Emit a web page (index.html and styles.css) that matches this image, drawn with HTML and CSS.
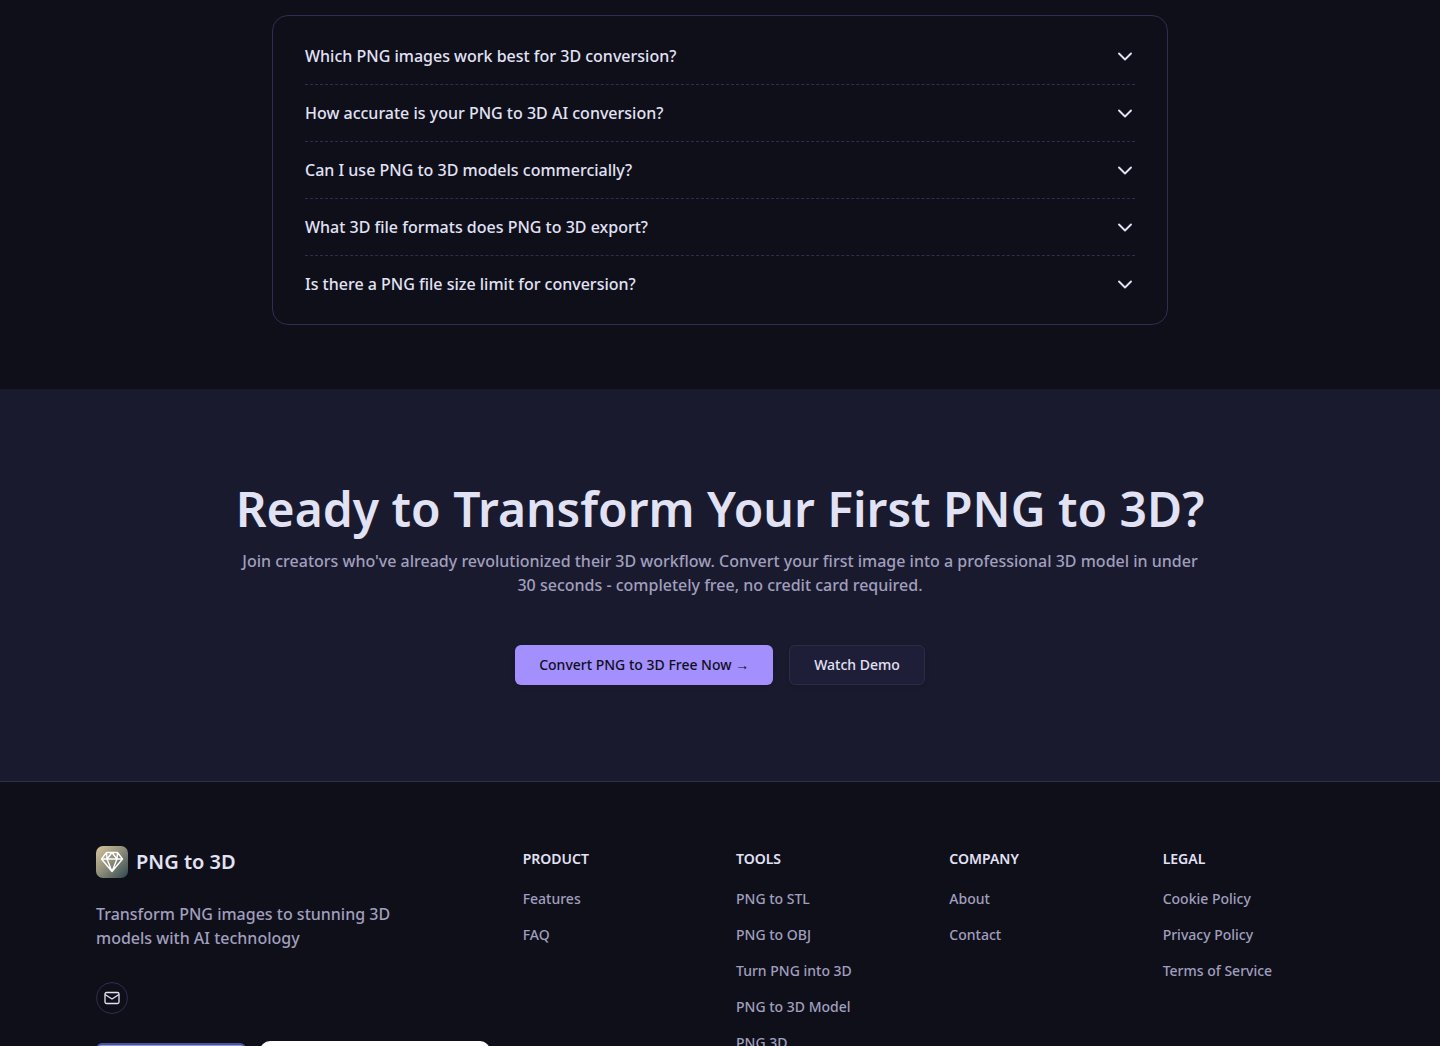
FILE: index.html
```html
<!doctype html>
<html lang="en">
<head>
<meta charset="utf-8">
<meta name="viewport" content="width=device-width,initial-scale=1">
<title>PNG to 3D</title>
<link rel="stylesheet" href="styles.css">
</head>
<body>
<main>
<section class="faq">
  <div class="faq-list">
    <button class="faq-item" type="button">Which PNG images work best for 3D conversion?
      <svg class="chevron" viewBox="0 0 20 20"><path d="M4 7.500l6 6 6-6"/></svg></button>
    <button class="faq-item" type="button">How accurate is your PNG to 3D AI conversion?
      <svg class="chevron" viewBox="0 0 20 20"><path d="M4 7.500l6 6 6-6"/></svg></button>
    <button class="faq-item" type="button">Can I use PNG to 3D models commercially?
      <svg class="chevron" viewBox="0 0 20 20"><path d="M4 7.500l6 6 6-6"/></svg></button>
    <button class="faq-item" type="button">What 3D file formats does PNG to 3D export?
      <svg class="chevron" viewBox="0 0 20 20"><path d="M4 7.500l6 6 6-6"/></svg></button>
    <button class="faq-item" type="button">Is there a PNG file size limit for conversion?
      <svg class="chevron" viewBox="0 0 20 20"><path d="M4 7.500l6 6 6-6"/></svg></button>
  </div>
</section>

<section class="cta">
  <div class="cta-inner">
    <h2>Ready to Transform Your First PNG to 3D?</h2>
    <p>Join creators who've already revolutionized their 3D workflow. Convert your first image into a professional 3D model in under 30 seconds - completely free, no credit card required.</p>
    <div class="actions">
      <button class="btn primary" type="button">Convert PNG to 3D Free Now →</button>
      <button class="btn" type="button">Watch Demo</button>
    </div>
  </div>
</section>
</main>

<footer>
  <div class="footer-grid">
    <div class="about">
      <a class="brand" href="#">
        <svg class="logo" viewBox="0 0 32 32">
          <defs><linearGradient id="logoBg" x1="0" y1="0" x2="1" y2="1">
            <stop offset="0" stop-color="#d9c69b"/><stop offset=".5" stop-color="#8b8b78"/><stop offset="1" stop-color="#2f4650"/>
          </linearGradient></defs>
          <rect width="32" height="32" rx="7" fill="url(#logoBg)"/>
          <path d="M10.500 6.500h11l5 6.500L16 25.500 5.500 13zM5.500 13h21M10.500 6.500L11 13l5 12.500L21 13l.5-6.500M11 13l5-6.500 5 6.500" fill="none" stroke="#fff" stroke-width="1.400" stroke-linejoin="round"/>
        </svg>
        PNG to 3D
      </a>
      <p>Transform PNG images to stunning 3D models with AI technology</p>
      <a class="mail" href="#" aria-label="Email">
        <svg viewBox="0 0 16 16"><rect x="1" y="2.500" width="14" height="11" rx="1.500"/><path d="M1 4.500l7 4.500 7-4.500"/></svg>
      </a>
      <div class="badges">
        <a class="badge blue" href="#"></a>
        <a class="badge white" href="#"></a>
      </div>
    </div>
    <nav>
      <h3>PRODUCT</h3>
      <a href="#">Features</a>
      <a href="#">FAQ</a>
    </nav>
    <nav>
      <h3>TOOLS</h3>
      <a href="#">PNG to STL</a>
      <a href="#">PNG to OBJ</a>
      <a href="#">Turn PNG into 3D</a>
      <a href="#">PNG to 3D Model</a>
      <a href="#">PNG 3D</a>
    </nav>
    <nav>
      <h3>COMPANY</h3>
      <a href="#">About</a>
      <a href="#">Contact</a>
    </nav>
    <nav>
      <h3>LEGAL</h3>
      <a href="#">Cookie Policy</a>
      <a href="#">Privacy Policy</a>
      <a href="#">Terms of Service</a>
    </nav>
  </div>
</footer>
</body>
</html>
```
FILE: styles.css
```css
:root{--bg:#0f0f1a;--panel:#1a1a2e;--panel2:#1f1e38;--text:#e2e2f5;--muted:#a09fbd;--line:#302d50;--accent:#a48fff}
*{box-sizing:border-box}
body{margin:0;height:100vh;overflow:hidden;background:var(--bg);color:var(--text);font:500 16px/24px "Noto Sans",sans-serif}
h2,h3,p{margin:0}
a{color:inherit;text-decoration:none}
button{font:inherit;color:inherit;cursor:pointer}

.faq{padding:15px 24px 64px}
.faq-list{max-width:896px;margin:auto;padding:12px 32px;border:1px solid var(--line);border-radius:16px}
.faq-item{display:flex;justify-content:space-between;align-items:center;width:100%;padding:16px 0;background:none;border:0;border-bottom:1px dashed var(--line);text-align:left}
.faq-item:last-child{border-bottom:0}
.chevron{width:20px;height:20px;fill:none;stroke:currentColor;stroke-width:1.9;stroke-linecap:round;stroke-linejoin:round}

.cta{background:var(--panel);padding:96px 24px;text-align:center}
.cta-inner{max-width:976px;margin:auto}
.cta h2{font-size:48px;line-height:48px;font-weight:600;margin-bottom:16px}
.cta p{color:var(--muted)}
.actions{display:flex;justify-content:center;gap:16px;margin-top:48px}
.btn{height:40px;padding:0 24px;font-size:14px;line-height:20px;border:1px solid #2d2b47;border-radius:6px;background:var(--panel2);box-shadow:0 2px 4px rgba(0,0,0,.1)}
.btn.primary{background:var(--accent);border:0;color:var(--bg)}

footer{border-top:1px solid var(--line);padding:64px 96px}
.footer-grid{display:grid;grid-template-columns:repeat(6,1fr);gap:32px}
.about{grid-column:span 2}
.brand{display:flex;align-items:center;gap:8px;font-size:20px;line-height:32px;font-weight:600}
.logo{width:32px;height:32px}
.about p{max-width:320px;margin:24px 0 32px;color:var(--muted)}
.mail{display:flex;align-items:center;justify-content:center;width:32px;height:32px;border:1px solid var(--line);border-radius:50%}
.mail svg{width:16px;height:16px;fill:none;stroke:currentColor;stroke-width:1.3;stroke-linejoin:round}
.badges{display:flex;align-items:center;gap:14px;margin-top:27px}
.badge{height:54px;border-radius:10px}
.badge.blue{width:150px;height:50px;background:#8f96d8;border:2px solid #4a5599;border-radius:6px}
.badge.white{width:230px;background:#fff}
nav{display:flex;flex-direction:column;gap:16px;font-size:14px;line-height:20px;color:var(--muted)}
nav h3{font-size:14px;line-height:26px;font-weight:600;color:var(--text);margin-bottom:1px}

@media(max-width:900px){.footer-grid{grid-template-columns:repeat(2,1fr)}.cta h2{font-size:36px}footer{padding:64px 24px}}
```
